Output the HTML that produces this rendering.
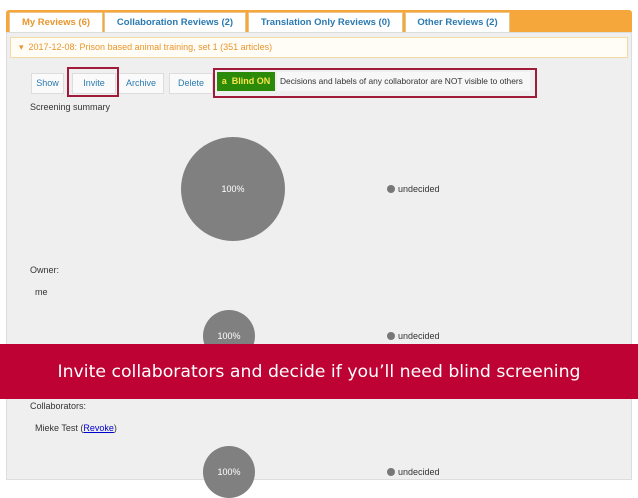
<!DOCTYPE html><html><head><style>
body{margin:0;width:638px;height:478px;overflow:hidden;background:#fff;font-family:"Liberation Sans",sans-serif;font-size:9px;color:#333;position:relative}
.a{position:absolute;white-space:nowrap}
.tab{position:absolute;top:12px;height:19px;background:#fff;border:1px solid #e8c58a;border-bottom:none;color:#2a7ab0;font-weight:bold;font-size:9.5px;line-height:19px;text-align:center;white-space:nowrap}
.btn{position:absolute;top:73px;height:19px;background:#fafafa;border:1px solid #ddd;color:#2a7ab0;line-height:19px;text-align:center;font-size:9px}
.pie{position:absolute;border-radius:50%;background:#808080;color:#fff;text-align:center;font-size:9px}
.dot{position:absolute;width:8px;height:8px;border-radius:50%;background:#777}
</style></head><body>
<div class="a" style="left:6px;top:10px;width:626px;height:22px;background:#f5a73b;border-radius:3px 3px 0 0"></div>
<div class="tab" style="left:9px;width:92px;color:#e8962e;height:21px">My Reviews (6)</div>
<div class="tab" style="left:104px;width:140px">Collaboration Reviews (2)</div>
<div class="tab" style="left:248px;width:153px">Translation Only Reviews (0)</div>
<div class="tab" style="left:405px;width:103px">Other Reviews (2)</div>
<div class="a" style="left:6px;top:32px;width:624px;height:446px;background:#efefef;border:1px solid #ddd"></div>
<div class="a" style="left:10px;top:37px;width:616px;height:19px;background:#fffdf6;border:1px solid #f3d9a6;color:#e8962e;line-height:19px;font-size:9px;text-indent:8px">▾ &nbsp;2017-12-08: Prison based animal training, set 1 (351 articles)</div>
<div class="btn" style="left:31px;width:31px">Show</div>
<div class="btn" style="left:72px;width:42px">Invite</div>
<div class="btn" style="left:118px;width:44px">Archive</div>
<div class="btn" style="left:169px;width:42px">Delete</div>
<div class="a" style="left:67px;top:67px;width:48px;height:26px;border:2px solid #a01a3a"></div>
<div class="a" style="left:213px;top:68px;width:320px;height:26px;border:2px solid #a01a3a"></div>
<div class="a" style="left:217px;top:72px;width:58px;height:19px;background:#2b8a09;color:#f7e54a;font-weight:bold;line-height:19px;text-align:center">a&nbsp; Blind ON</div>
<div class="a" style="left:277px;top:72px;width:253px;height:19px;background:#f7f7f7;line-height:19px;text-indent:3px;font-size:8.4px">Decisions and labels of any collaborator are NOT visible to others</div>
<div class="a" style="left:30px;top:102px">Screening summary</div>
<div class="pie" style="left:181px;top:137px;width:104px;height:104px;line-height:104px">100%</div>
<div class="dot" style="left:387px;top:185px"></div><div class="a" style="left:398px;top:184px">undecided</div>
<div class="a" style="left:30px;top:265px">Owner:</div>
<div class="a" style="left:35px;top:287px">me</div>
<div class="pie" style="left:203px;top:310px;width:52px;height:52px;line-height:52px">100%</div>
<div class="dot" style="left:387px;top:332px"></div><div class="a" style="left:398px;top:331px">undecided</div>
<div class="a" style="left:30px;top:401px">Collaborators:</div>
<div class="a" style="left:35px;top:423px">Mieke Test (<span style="color:#0000cc;text-decoration:underline">Revoke</span>)</div>
<div class="pie" style="left:203px;top:446px;width:52px;height:52px;line-height:52px">100%</div>
<div class="dot" style="left:387px;top:468px"></div><div class="a" style="left:398px;top:467px">undecided</div>
<div class="a" style="left:0;top:344px;width:638px;height:55px;background:#be0233;color:#fff;font-family:'DejaVu Sans','Liberation Sans',sans-serif;font-size:17.3px;line-height:57px;text-align:center">Invite collaborators and decide if you’ll need blind screening</div>
</body></html>
